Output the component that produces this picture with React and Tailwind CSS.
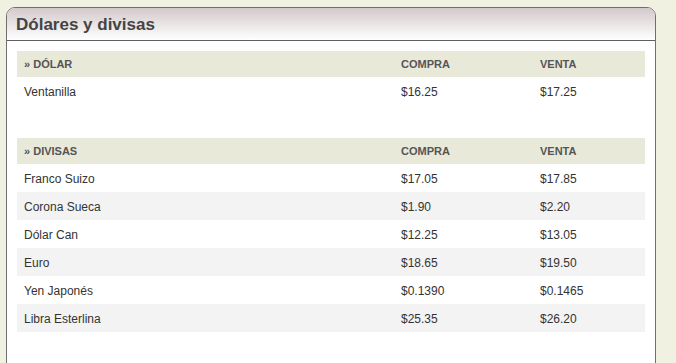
import React from 'react';

const divisas = [
  ['Franco Suizo', '$17.05', '$17.85'],
  ['Corona Sueca', '$1.90', '$2.20'],
  ['Dólar Can', '$12.25', '$13.05'],
  ['Euro', '$18.65', '$19.50'],
  ['Yen Japonés', '$0.1390', '$0.1465'],
  ['Libra Esterlina', '$25.35', '$26.20'],
];

const cols = 'grid grid-cols-[377px_139px_1fr]';

const HeaderRow = ({ label }) => (
  <div className={`${cols} h-[26px] items-center pt-[1px] bg-[#e9e9da] text-[11px] font-bold text-[#555] uppercase`}>
    <div className="pl-[7px]">» {label}</div>
    <div className="pl-[7px]">Compra</div>
    <div className="pl-[7px]">Venta</div>
  </div>
);

const Row = ({ cells, shaded }) => (
  <div className={`${cols} h-[28px] items-center pt-[2px] text-[12px] text-[#333] ${shaded ? 'bg-[#f3f3f3]' : 'bg-white'}`}>
    {cells.map((c, i) => (
      <div key={i} className="pl-[7px]">{c}</div>
    ))}
  </div>
);

export default function App() {
  return (
    <div className="w-[676px] h-[363px] overflow-hidden bg-[#f1f1e1] pl-[6px] pt-[7px] pr-[20px]" style={{ fontFamily: '"Liberation Sans", Arial, sans-serif' }}>
      <div className="h-[400px] bg-white border border-[#6f6f6f] rounded-t-[9px] overflow-hidden">
        <div className="h-[33px] flex items-center pl-[9px] pt-[1px] bg-gradient-to-b from-[#d3c9cb] to-white border-b border-[#5f5f5f]">
          <h2 className="text-[17px] font-bold text-[#444]">Dólares y divisas</h2>
        </div>
        <div className="px-[10px] pt-[10px]">
          <HeaderRow label="Dólar" />
          <Row cells={['Ventanilla', '$16.25', '$17.25']} />
          <div className="h-[33px]" />
          <HeaderRow label="Divisas" />
          {divisas.map((d, i) => (
            <Row key={d[0]} cells={d} shaded={i % 2 === 1} />
          ))}
        </div>
      </div>
    </div>
  );
}
